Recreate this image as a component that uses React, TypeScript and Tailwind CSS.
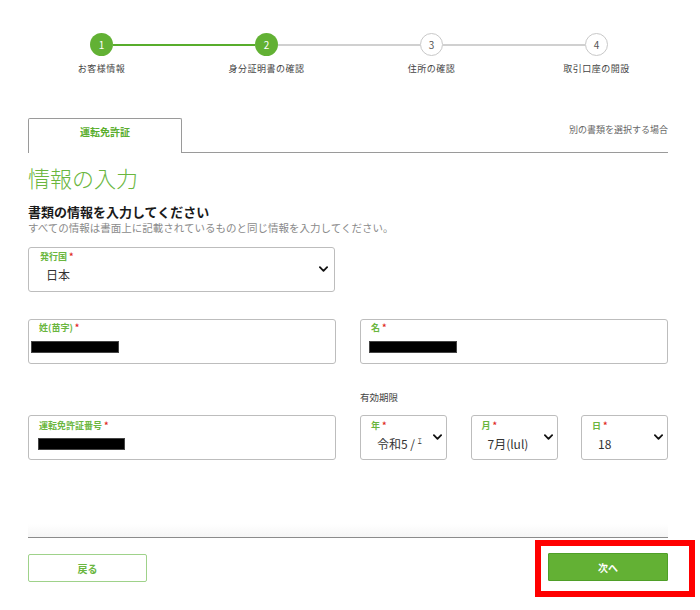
import React from "react";

const font = { fontFamily: '"Noto Sans CJK JP", "Noto Sans", sans-serif' };

function Chevron() {
  return (
    <svg width="9" height="6" viewBox="0 0 10 6" className="shrink-0">
      <path d="M1 1l4 4 4-4" fill="none" stroke="#111" strokeWidth="2" strokeLinecap="round" strokeLinejoin="round" />
    </svg>
  );
}

function Label({ text }: { text: string }) {
  return (
    <div className="text-[9px] leading-[10px] font-bold text-[#6ab63e]">
      {text}
      <span className="text-[#e0281f] ml-[2px]">*</span>
    </div>
  );
}

const steps = [
  { n: "1", label: "お客様情報", done: true },
  { n: "2", label: "身分証明書の確認", done: true },
  { n: "3", label: "住所の確認", done: false },
  { n: "4", label: "取引口座の開設", done: false },
];

export default function App() {
  return (
    <div className="w-[700px] h-[610px] bg-white relative overflow-hidden" style={font}>
      {/* stepper */}
      <div className="grid grid-cols-4 w-[660px] ml-[19px] pt-[33px]">
        {steps.map((s, i) => (
          <div key={s.n} className="flex flex-col items-center">
            <div className="flex items-center w-full">
              <div className={`flex-1 h-[2px] ${i === 0 ? "" : i <= 1 ? "bg-[#58ad2c]" : "bg-[#d0d0d0]"}`} />
              <div
                className={`w-[23px] h-[23px] rounded-full flex items-center justify-center text-[10px] ${
                  s.done ? "bg-[#62b134] text-white" : "bg-white border border-[#c8c8c8] text-[#555]"
                }`}
              >
                {s.n}
              </div>
              <div className={`flex-1 h-[2px] ${i === 3 ? "" : i === 0 ? "bg-[#58ad2c]" : "bg-[#d0d0d0]"}`} />
            </div>
            <div className="mt-[6px] text-[9px] text-[#444] tracking-[0.5px]">{s.label}</div>
          </div>
        ))}
      </div>

      <div className="mx-[28px] w-[640px]">
        {/* tabs */}
        <div className="flex items-end mt-[42px]">
          <div className="w-[154px] h-[35px] border border-b-0 border-[#9a9a9a] rounded-t-[2px] flex justify-center pt-[5px]">
            <span className="text-[10px] font-bold text-[#5aae2e]">運転免許証</span>
          </div>
          <div className="flex-1 h-[35px] border-b border-[#9a9a9a] flex justify-end pt-[5px]">
            <span className="text-[9px] text-[#666]">別の書類を選択する場合</span>
          </div>
        </div>

        {/* headings */}
        <div className="mt-[9px] text-[22px] leading-[30px] text-[#6ab63e] font-light">情報の入力</div>
        <div className="mt-[11px] text-[13px] leading-[18px] font-bold text-[#1a1a1a]">書類の情報を入力してください</div>
        <div className="text-[10.5px] leading-[13px] text-[#8a8a8a]">
          すべての情報は書面上に記載されているものと同じ情報を入力してください。
        </div>

        {/* issuing country */}
        <div className="mt-[13px] w-[307px] h-[45px] border-[1.5px] border-[#bdbdbd] rounded-[3px] flex items-center pr-[6px]">
          <div className="flex-1 pl-[11px] pt-[1px] self-start">
            <div className="mt-[3px]">
              <Label text="発行国" />
            </div>
            <div className="mt-[4px] pl-[6px] text-[12px] text-[#333]">日本</div>
          </div>
          <Chevron />
        </div>

        {/* names */}
        <div className="flex justify-between mt-[27px]">
          {["姓(苗字)", "名"].map((l) => (
            <div key={l} className="w-[308px] h-[45px] border-[1.5px] border-[#bdbdbd] rounded-[3px] pt-[3px]">
              <div className="pl-[10px]">
                <Label text={l} />
              </div>
              <div className={`mt-[8px] w-[88px] h-[12px] bg-black border border-[#444] ${l === "名" ? "ml-[8px]" : "ml-[2px]"}`} />
            </div>
          ))}
        </div>

        {/* license number and expiry */}
        <div className="flex justify-between mt-[24px]">
          <div className="w-[308px] h-[45px] border-[1.5px] border-[#bdbdbd] rounded-[3px] mt-[27px] pt-[5px]">
            <div className="pl-[10px]">
              <Label text="運転免許証番号" />
            </div>
            <div className="mt-[7px] ml-[9px] w-[87px] h-[12px] bg-black border border-[#444]" />
          </div>
          <div className="w-[308px]">
            <div className="text-[9.5px] leading-[13px] text-[#444] h-[27px] pt-[3px]">有効期限</div>
            <div className="flex justify-between">
              {[
                ["年", "令和5 / ᠍"],
                ["月", "7月(lul)"],
                ["日", "18"],
              ].map(([l, v]) => (
                <div key={l} className="w-[87px] h-[45px] border-[1.5px] border-[#bdbdbd] rounded-[3px] flex items-center pr-[4px]">
                  <div className="flex-1 self-start pl-[10px] pt-[5px] overflow-hidden">
                    <Label text={l} />
                    <div className="mt-[4px] pl-[6px] text-[12px] text-[#333] whitespace-nowrap">
                      {l === "年" ? (
                        <>
                          令和5 / <span className="text-[8px] align-top">ｴ</span>
                        </>
                      ) : (
                        v
                      )}
                    </div>
                  </div>
                  <Chevron />
                </div>
              ))}
            </div>
          </div>
        </div>

        {/* footer */}
        <div className="mt-[64px] h-[13px] bg-gradient-to-b from-white to-[#f6f6f6]" />
        <div className="h-[1.5px] bg-[#8c8c8c]" />
        <div className="flex justify-between items-start mt-[16px]">
          <button className="w-[119px] h-[28px] border border-[#9fd28a] rounded-[2px] text-[10px] font-bold text-[#6ab63e] bg-white">
            戻る
          </button>
          <div className="-mr-[27px] -mt-[14px] border-[6px] border-[#ff0000] px-[7px] pt-[7px] pb-[10px] pr-[21px]">
            <button className="w-[120px] h-[28px] bg-[#63b134] border border-[#4f9f28] rounded-[1px] text-[10px] font-bold text-white block">
              次へ
            </button>
          </div>
        </div>
      </div>
    </div>
  );
}
